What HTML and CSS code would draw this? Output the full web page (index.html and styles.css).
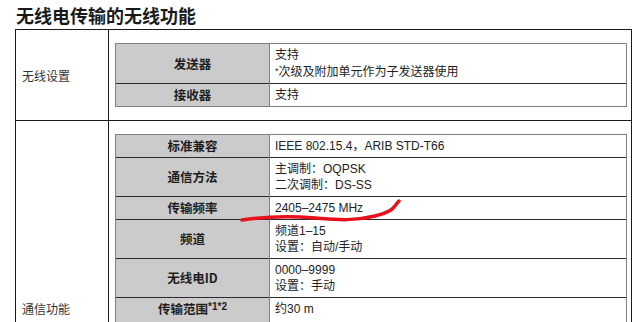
FILE: index.html
```html
<!DOCTYPE html>
<html lang="zh-CN">
<head>
<meta charset="utf-8">
<title>无线电传输的无线功能</title>
<link rel="stylesheet" href="styles.css">
</head>
<body>
<h1 class="title">无线电传输的无线功能</h1>
<table class="outer">
  <colgroup><col class="oc1"><col class="oc2"></colgroup>
  <tr>
    <td class="label">无线设置</td>
    <td class="holder">
      <table class="inner">
        <colgroup><col class="ic1"><col class="ic2"></colgroup>
        <tr><th>发送器</th><td>支持<br><span class="ast">*</span>次级及附加单元作为子发送器使用</td></tr>
        <tr><th>接收器</th><td>支持</td></tr>
      </table>
    </td>
  </tr>
  <tr>
    <td class="label label-low">通信功能</td>
    <td class="holder">
      <table class="inner">
        <colgroup><col class="ic1"><col class="ic2"></colgroup>
        <tr><th>标准兼容</th><td>IEEE 802.15.4，ARIB STD-T66</td></tr>
        <tr><th>通信方法</th><td>主调制：OQPSK<br>二次调制：DS-SS</td></tr>
        <tr><th>传输频率</th><td>2405–2475 MHz</td></tr>
        <tr><th>频道</th><td>频道1–15<br>设置：自动/手动</td></tr>
        <tr><th>无线电ID</th><td>0000–9999<br>设置：手动</td></tr>
        <tr class="last"><th>传输范围<sup>*1*2</sup></th><td>约30 m</td></tr>
      </table>
    </td>
  </tr>
</table>
<svg class="mark" width="640" height="322" viewBox="0 0 640 322" aria-hidden="true">
  <path d="M242 220 C 262 217, 290 216, 315 218 S 355 221, 375 216 S 393 207, 399 201" fill="none" stroke="#e8101a" stroke-width="3.5" stroke-linecap="round"/>
</svg>
</body>
</html>
```
FILE: styles.css
```css
html, body {
  margin: 0;
  padding: 0;
  background: #ffffff;
}
body {
  position: relative;
  width: 640px;
  height: 322px;
  overflow: hidden;
  font-family: "Liberation Sans", "Noto Sans CJK SC", sans-serif;
  color: #222;
}
.title {
  margin: 0;
  padding: 3px 0 0 16px;
  height: 26px;
  line-height: 24px;
  font-size: 18px;
  font-weight: bold;
  color: #1a1a1a;
  font-family: "Noto Sans CJK SC", sans-serif;
}
.outer {
  margin-left: 15px;
  width: 617px;
  border-collapse: collapse;
  table-layout: fixed;
  border: 1px solid #1a1a1a;
}
.oc1 { width: 93px; }
.outer > tbody > tr > td {
  border: 1px solid #1a1a1a;
}
.outer > tbody > tr > td + td {
  border-left: 1px solid #777;
}
.label {
  padding: 0 0 0 6px;
  font-size: 12px;
  color: #333;
  vertical-align: middle;
  font-family: "Noto Sans CJK SC", sans-serif;
}
.label-low {
  vertical-align: bottom;
  padding-bottom: 22px;
}
.holder {
  padding: 13px 6px 13px 6px;
}
.inner {
  width: 512px;
  border-collapse: collapse;
  table-layout: fixed;
  border: 1px solid #808080;
}
.ic1 { width: 154px; }
.inner th, .inner td {
  border-top: 1px solid #2a2a2a;
  border-left: 1px solid #808080;
  border-right: 1px solid #808080;
  font-size: 12px;
  line-height: 16px;
  padding: 3px 5px 3px 5px;
}
.inner tr:first-child th, .inner tr:first-child td {
  border-top: 1px solid #808080;
}
.inner .last th, .inner .last td {
  padding-bottom: 8px;
}
.inner th {
  background: #cbcbcb;
  font-weight: bold;
  text-align: center;
  color: #1e1e1e;
  font-family: "Noto Sans CJK SC", sans-serif;
  font-size: 12.5px;
}
.inner td {
  text-align: left;
  color: #222;
  background: #fff;
}
.ast {
  font-size: 9px;
  vertical-align: 2px;
}
sup {
  font-size: 10px;
  line-height: 0;
  vertical-align: 4px;
  font-family: "Liberation Sans", sans-serif;
}
.mark {
  position: absolute;
  left: 0;
  top: 0;
  pointer-events: none;
}
```
